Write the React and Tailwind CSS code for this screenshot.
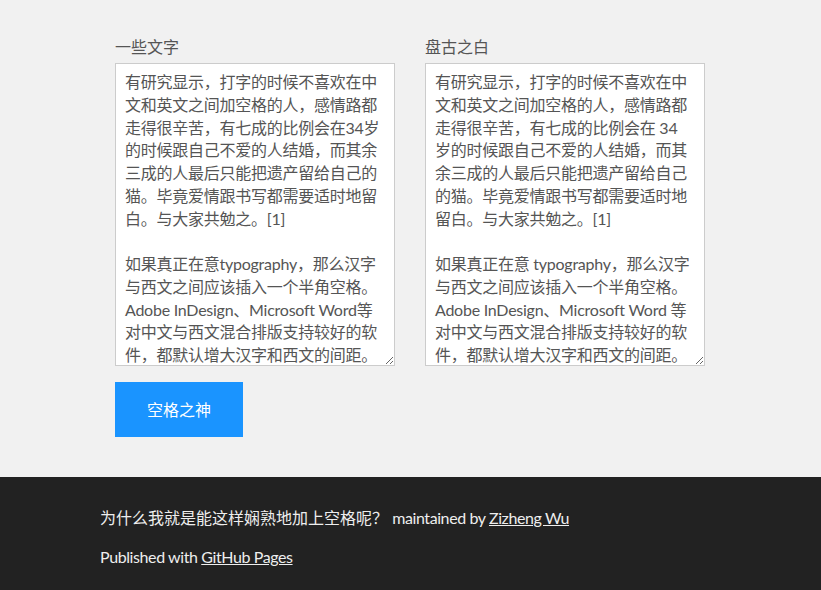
import React from 'react';

const font = { fontFamily: 'Lato, "Noto Sans CJK SC", sans-serif' };

const leftText = `有研究显示，打字的时候不喜欢在中文和英文之间加空格的人，感情路都走得很辛苦，有七成的比例会在34岁的时候跟自己不爱的人结婚，而其余三成的人最后只能把遗产留给自己的猫。毕竟爱情跟书写都需要适时地留白。与大家共勉之。[1]

如果真正在意typography，那么汉字与西文之间应该插入一个半角空格。Adobe InDesign、Microsoft Word等对中文与西文混合排版支持较好的软件，都默认增大汉字和西文的间距。`;

const rightText = `有研究显示，打字的时候不喜欢在中文和英文之间加空格的人，感情路都走得很辛苦，有七成的比例会在 34 岁的时候跟自己不爱的人结婚，而其余三成的人最后只能把遗产留给自己的猫。毕竟爱情跟书写都需要适时地留白。与大家共勉之。[1]

如果真正在意 typography，那么汉字与西文之间应该插入一个半角空格。Adobe InDesign、Microsoft Word 等对中文与西文混合排版支持较好的软件，都默认增大汉字和西文的间距。`;

const Box = ({ label, value }) => (
  <div className="flex flex-col">
    <label className="text-[16px] leading-[20px] text-[#555] mb-[6px]">{label}</label>
    <textarea
      defaultValue={value}
      className="w-[280px] h-[303px] bg-white border border-[#ccc] px-[9px] pt-[7px] text-[16px] leading-[22.75px] tracking-[-0.25px] text-[#555] overflow-hidden outline-none"
      style={font}
    />
  </div>
);

export default function App() {
  return (
    <div className="min-h-[590px] bg-[#f1f1f1] flex flex-col" style={font}>
      <main className="px-[115px] pt-[37px] pb-[40px]">
        <div className="flex gap-[30px]">
          <Box label="一些文字" value={leftText} />
          <Box label="盘古之白" value={rightText} />
        </div>
        <button className="mt-[16px] w-[128px] h-[55px] bg-[#1a94ff] text-white text-[16px]">
          空格之神
        </button>
      </main>
      <footer className="flex-1 bg-[#222] text-[#eee] text-[16px] leading-[20px] px-[100px] pt-[31px] pb-[20px]">
        <p>
          为什么我就是能这样娴熟地加上空格呢？{' '}
          <span className="tracking-[-0.4px]">
            maintained by <a href="#" className="underline">Zizheng Wu</a>
          </span>
        </p>
        <p className="mt-[19px] tracking-[-0.4px]">
          Published with <a href="#" className="underline">GitHub Pages</a>
        </p>
      </footer>
    </div>
  );
}
